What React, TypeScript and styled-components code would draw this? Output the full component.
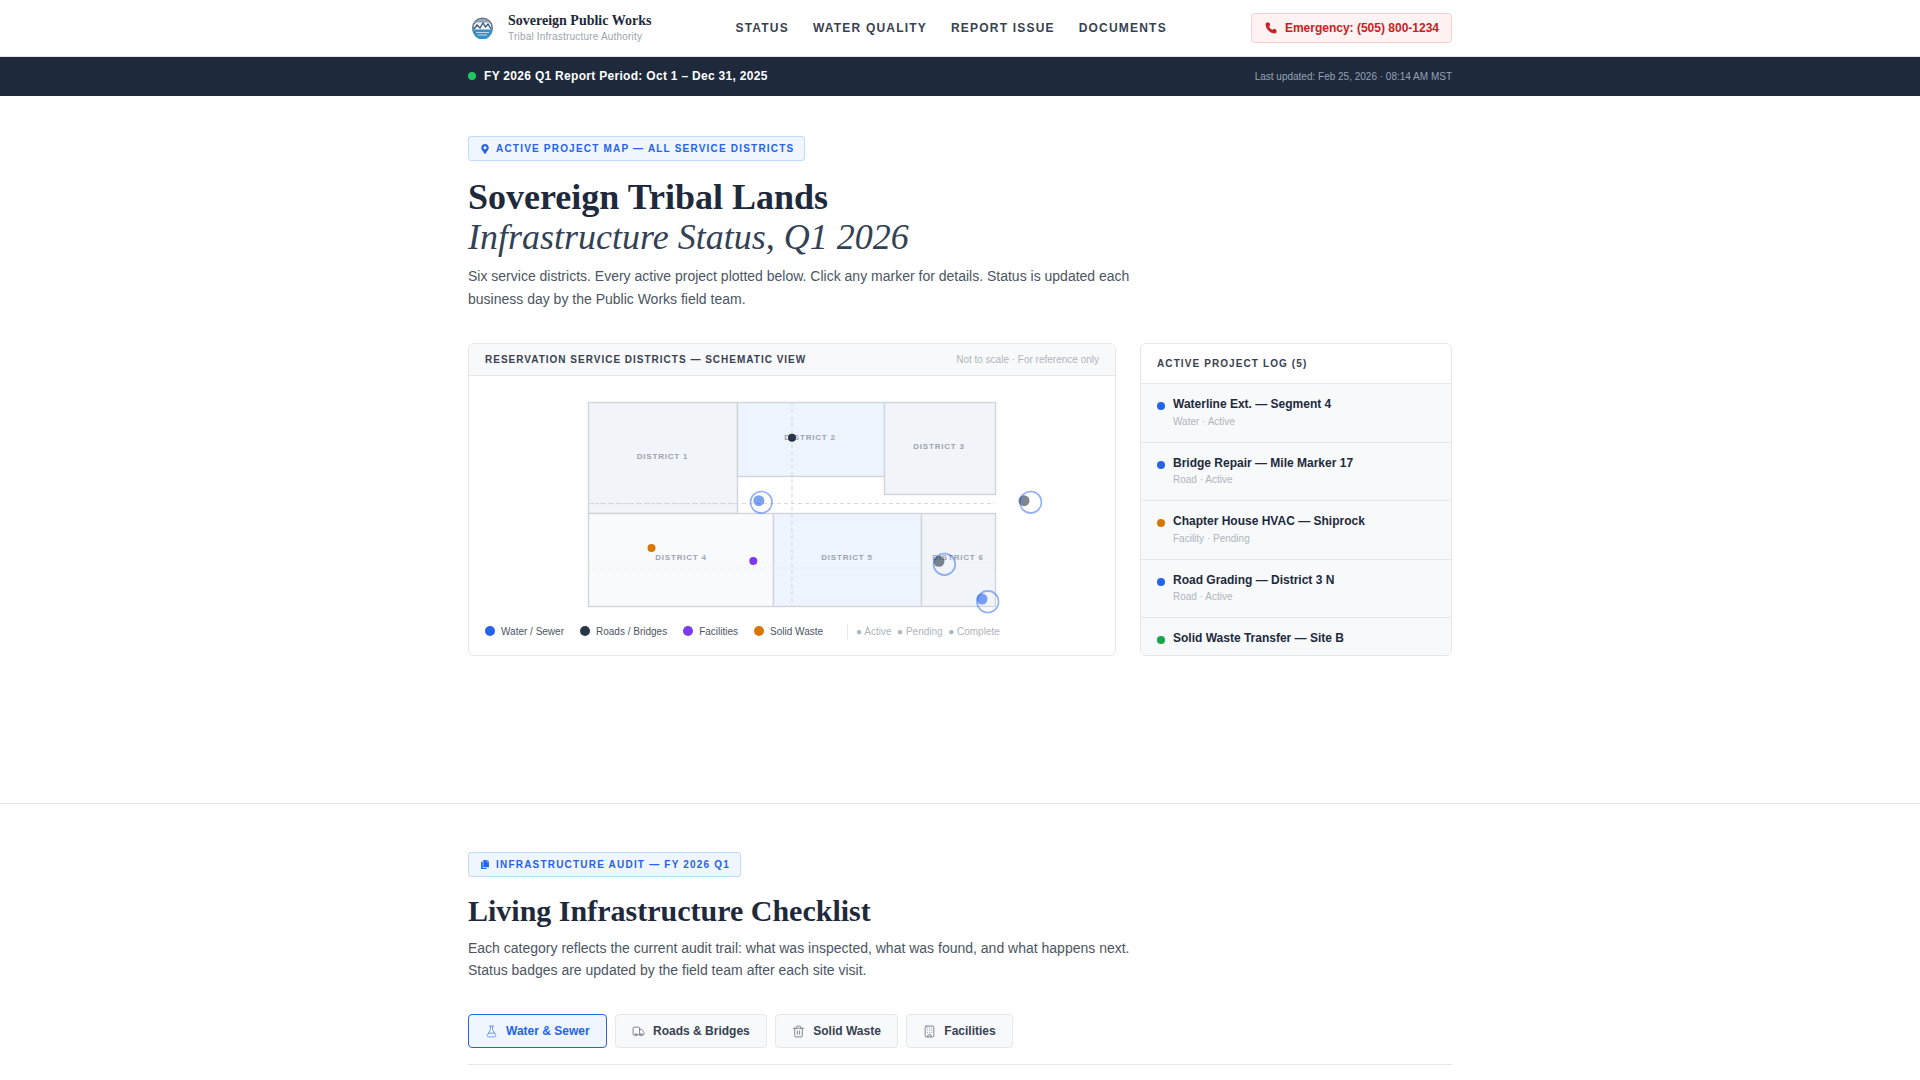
import React from "react";
import styled, { createGlobalStyle } from "styled-components";
import { Building, FlaskConical, Phone, Trash2, Truck } from "lucide-react";
import { FaCopy, FaMapMarkerAlt } from "react-icons/fa";

const GlobalStyle = createGlobalStyle`
  * {
    box-sizing: border-box;
  }

  html,
  body {
    margin: 0;
    background: #fff;
    overflow-x: hidden;
    font-family: "Liberation Sans", Arial, sans-serif;
    color: #1e293b;
  }
`;

const Wrap = styled.div`
  width: 984px;
  margin: 0 auto;
`;

// Top header
const Header = styled.header`
  height: 57px;
  border-bottom: 1px solid #e5e7eb;
  background: #fff;
`;

const HeaderRow = styled(Wrap)`
  height: 56px;
  display: flex;
  align-items: center;
`;

const Brand = styled.div`
  width: 240px;
  display: flex;
  align-items: center;
  gap: 15px;
  padding-left: 4px;
`;

const BrandText = styled.div`
  display: flex;
  flex-direction: column;
`;

const BrandName = styled.span`
  font-family: "Liberation Serif", "Times New Roman", serif;
  font-size: 14px;
  line-height: 17px;
  font-weight: 700;
  color: #1e293b;
`;

const BrandSub = styled.span`
  font-size: 10px;
  line-height: 14px;
  margin-top: 1px;
  letter-spacing: 0.2px;
  color: #9ca3af;
`;

const Nav = styled.nav`
  display: flex;
  gap: 24px;
  margin-left: 27.5px;
`;

const NavLink = styled.a`
  font-size: 12px;
  font-weight: 700;
  letter-spacing: 1.2px;
  color: #374151;
`;

const Emergency = styled.a`
  height: 30px;
  margin-left: auto;
  padding: 0 12px 0 13px;
  display: flex;
  align-items: center;
  gap: 8px;
  font-size: 12px;
  font-weight: 700;
  color: #c81e1e;
  background: #fef2f2;
  border: 1px solid #fecaca;
  border-radius: 4px;
`;

// Report period strip
const Strip = styled.div`
  height: 39px;
  background: #1e293b;
`;

const StripRow = styled(Wrap)`
  height: 100%;
  display: flex;
  align-items: center;
  justify-content: space-between;
`;

const Period = styled.div`
  display: flex;
  align-items: center;
  gap: 8px;
  font-size: 12px;
  line-height: 14px;
  padding-bottom: 1px;
  font-weight: 700;
  letter-spacing: 0.3px;
  color: #fff;
`;

const LiveDot = styled.span`
  width: 8px;
  height: 8px;
  border-radius: 50%;
  background: #22c55e;
`;

const Updated = styled.span`
  font-size: 10px;
  color: #94a3b8;
`;

// Sections
const MapSection = styled.section`
  padding: 40px 0 147px;
  border-bottom: 1px solid #e5e7eb;
`;

const AuditSection = styled.section`
  padding: 48px 0 15px;
`;

const Eyebrow = styled.div`
  display: inline-flex;
  align-items: center;
  gap: 6px;
  height: 25px;
  padding: 0 10px 0 11px;
  font-size: 10px;
  font-weight: 700;
  letter-spacing: 1.2px;
  color: #2563eb;
  background: #eff6ff;
  border: 1px solid #bfdbfe;
  border-radius: 3px;
  vertical-align: top;

  svg {
    width: 10px;
    flex: none;
  }
`;

const Title = styled.h1`
  margin: 16px 0 0;
  font-family: "Liberation Serif", "Times New Roman", serif;
  font-size: 36px;
  line-height: 40px;
  font-weight: 700;
  color: #1e293b;
`;

const TitleSub = styled.em`
  display: block;
  font-weight: 400;
  color: #334155;
`;

const SectionTitle = styled.h2`
  margin: 16px 0 0;
  font-family: "Liberation Serif", "Times New Roman", serif;
  font-size: 30px;
  line-height: 36px;
  font-weight: 700;
  color: #1e293b;
`;

const Lead = styled.p<{ $top: number; $lh: number }>`
  margin: ${(p) => p.$top}px 0 0;
  max-width: 680px;
  font-size: 14px;
  line-height: ${(p) => p.$lh}px;
  color: #4b5563;
`;

// Map + log
const Columns = styled.div`
  margin-top: 32px;
  display: grid;
  grid-template-columns: 648px 1fr;
  gap: 24px;
  height: 313px;
`;

const Card = styled.div`
  display: flex;
  flex-direction: column;
  overflow: hidden;
  background: #fff;
  border: 1px solid #e5e7eb;
  border-radius: 6px;
`;

const MapHead = styled.div`
  height: 32px;
  flex: none;
  padding: 0 16px;
  display: flex;
  align-items: center;
  justify-content: space-between;
  background: #f8f9fb;
  border-bottom: 1px solid #e5e7eb;
`;

const CardTitle = styled.span`
  font-size: 10px;
  font-weight: 700;
  letter-spacing: 1px;
  color: #374151;
`;

const Muted = styled.span`
  font-size: 10px;
  color: #adb5bd;
`;

const MapSvg = styled.svg`
  display: block;
  flex: none;
  width: 646px;
  height: 240px;
`;

const Legend = styled.div`
  display: flex;
  align-items: center;
  gap: 16px;
  padding: 0 16px;
  height: 30px;
`;

const LegendItem = styled.span`
  display: flex;
  align-items: center;
  gap: 6px;
  font-size: 10px;
  color: #4b5563;
`;

const Swatch = styled.span<{ $color: string }>`
  width: 10px;
  height: 10px;
  border-radius: 50%;
  background: ${(p) => p.$color};
`;

const LegendStatus = styled.span`
  margin-left: 8px;
  padding-left: 8px;
  border-left: 1px solid #e5e7eb;
  font-size: 10px;
  line-height: 15px;
  color: #adb5bd;
`;

const LogHead = styled.div`
  height: 40px;
  flex: none;
  padding: 0 16px;
  display: flex;
  align-items: center;
  border-bottom: 1px solid #e5e7eb;
`;

const LogTitle = styled(CardTitle)`
  letter-spacing: 1.1px;
`;

const LogRow = styled.div`
  flex: none;
  height: 58.5px;
  padding: 12px 16px 0;
  display: flex;
  align-items: flex-start;
  gap: 8px;
  background: #f8f9fb;
  border-bottom: 1px solid #e5e7eb;
`;

const LogDot = styled.span<{ $color: string }>`
  flex: none;
  width: 8px;
  height: 8px;
  margin-top: 6px;
  border-radius: 50%;
  background: ${(p) => p.$color};
`;

const LogName = styled.div`
  font-size: 12px;
  line-height: 16.5px;
  font-weight: 700;
  color: #1e293b;
`;

const LogMeta = styled.div`
  margin-top: 1px;
  font-size: 10px;
  line-height: 16px;
  color: #adb5bd;
`;

// Category tabs
const Tabs = styled.div`
  margin-top: 33px;
  padding-bottom: 16px;
  display: flex;
  gap: 8.5px;
  border-bottom: 1px solid #e5e7eb;
`;

const Tab = styled.button<{ $active?: boolean }>`
  height: 34px;
  padding: 0 16px;
  display: flex;
  align-items: center;
  gap: 8px;
  font-family: inherit;
  font-size: 12px;
  font-weight: 700;
  color: ${(p) => (p.$active ? "#2563eb" : "#374151")};
  background: ${(p) => (p.$active ? "#eff6ff" : "#f8f9fb")};
  border: 1px solid ${(p) => (p.$active ? "#2563eb" : "#e5e7eb")};
  border-radius: 4px;

  svg {
    opacity: 0.75;
  }
`;

const dark = "#293548";

const legend = [
  { label: "Water / Sewer", color: "#2563eb" },
  { label: "Roads / Bridges", color: dark },
  { label: "Facilities", color: "#7c3aed" },
  { label: "Solid Waste", color: "#d97706" },
];

const log = [
  { name: "Waterline Ext. — Segment 4", meta: "Water · Active", color: "#2563eb" },
  { name: "Bridge Repair — Mile Marker 17", meta: "Road · Active", color: "#2563eb" },
  { name: "Chapter House HVAC — Shiprock", meta: "Facility · Pending", color: "#d97706" },
  { name: "Road Grading — District 3 N", meta: "Road · Active", color: "#2563eb" },
  { name: "Solid Waste Transfer — Site B", color: "#16a34a" },
];

// map coords are page px minus the svg origin (469, 376)
const districts = [
  { x: 119.5, y: 26.5, w: 149, h: 111, fill: "#f1f4f9", label: "DISTRICT 1", lx: 193.5, ly: 81 },
  { x: 268.5, y: 26.5, w: 147, h: 74, fill: "#eef4fd", label: "DISTRICT 2", lx: 341, ly: 62 },
  { x: 415.5, y: 26.5, w: 111, h: 92, fill: "#f1f4f9", label: "DISTRICT 3", lx: 470, ly: 71 },
  { x: 119.5, y: 137.5, w: 185, h: 93, fill: "#f9fafc", label: "DISTRICT 4", lx: 212, ly: 182 },
  { x: 304.5, y: 137.5, w: 148, h: 93, fill: "#eef4fd", label: "DISTRICT 5", lx: 378, ly: 182 },
  { x: 452.5, y: 137.5, w: 74, h: 93, fill: "#f1f4f9", label: "DISTRICT 6", lx: 489, ly: 182 },
];

const rings = [
  { cx: 292.3, cy: 126.3, dx: 289.8, dy: 124.7, color: "#2563eb" },
  { cx: 561.7, cy: 126.3, dx: 555, dy: 124.7, color: dark },
  { cx: 475.4, cy: 188.3, dx: 470, dy: 185.3, color: dark },
  { cx: 518.8, cy: 225.7, dx: 513, dy: 223, color: "#2563eb" },
];

function DistrictMap() {
  return (
    <MapSvg viewBox="0 0 646 240">
      {districts.map((d) => (
        <rect key={d.label} x={d.x} y={d.y} width={d.w} height={d.h} fill={d.fill} stroke="#d1d5db" strokeWidth="1.4" />
      ))}
      <line x1="119" y1="127.5" x2="526" y2="127.5" stroke="#d6dae1" strokeWidth="1.2" strokeDasharray="4 3" />
      <line x1="119" y1="127.5" x2="268" y2="127.5" stroke="#d6dae1" strokeWidth="1.6" strokeDasharray="2 2" />
      <line x1="119" y1="192" x2="526" y2="192" stroke="#e5e7eb" strokeWidth="0.8" strokeDasharray="2 2" />
      <line x1="323" y1="26" x2="323" y2="230" stroke="#d6dae1" strokeWidth="1.2" strokeDasharray="4 3" />
      {districts.map((d) => (
        <text key={d.label} x={d.lx} y={d.ly} textAnchor="middle" dominantBaseline="middle" fontFamily="Liberation Sans, Arial, sans-serif" fontSize="8" fontWeight="700" letterSpacing="0.8" fill="#9ca3af">
          {d.label}
        </text>
      ))}
      <circle cx="323" cy="61.7" r="4" fill={dark} />
      <circle cx="182.5" cy="172" r="4" fill="#d97706" />
      <circle cx="284.3" cy="185" r="4" fill="#7c3aed" />
      {rings.map((r) => (
        <g key={r.cx}>
          <circle cx={r.dx} cy={r.dy} r="5.5" fill={r.color} opacity="0.6" />
          <circle cx={r.cx} cy={r.cy} r="10.8" fill="none" stroke="#2563eb" strokeWidth="1.6" opacity="0.5" />
        </g>
      ))}
    </MapSvg>
  );
}

function Logo() {
  return (
    <svg width="21" height="22" viewBox="0 0 21 22">
      <circle cx="10.5" cy="11" r="9.7" fill="#f1f5f9" stroke="#64748b" strokeWidth="1.6" />
      <path d="M3 5.5a9.7 9.7 0 0 1 15 0z" fill="#94a3b8" />
      <path d="M0.5 12.5h20a10 10 0 0 1-20 0z" fill="#3b8fc4" />
      <path d="M2 12l3-4 3 3 3-5 2.5 4 2.5-3 3 5" fill="none" stroke="#33566f" strokeWidth="1.3" />
      <path d="M4 15.5h13M6 18h9" fill="none" stroke="#dbeafe" strokeWidth="0.8" />
    </svg>
  );
}

export default function App() {
  return (
    <>
      <GlobalStyle />
      <Header>
        <HeaderRow>
          <Brand>
            <Logo />
            <BrandText>
              <BrandName>Sovereign Public Works</BrandName>
              <BrandSub>Tribal Infrastructure Authority</BrandSub>
            </BrandText>
          </Brand>
          <Nav>
            <NavLink>STATUS</NavLink>
            <NavLink>WATER QUALITY</NavLink>
            <NavLink>REPORT ISSUE</NavLink>
            <NavLink>DOCUMENTS</NavLink>
          </Nav>
          <Emergency>
            <Phone size={12} fill="#c81e1e" strokeWidth={2} />
            Emergency: (505) 800-1234
          </Emergency>
        </HeaderRow>
      </Header>
      <Strip>
        <StripRow>
          <Period>
            <LiveDot />
            FY 2026 Q1 Report Period: Oct 1 – Dec 31, 2025
          </Period>
          <Updated>Last updated: Feb 25, 2026 · 08:14 AM MST</Updated>
        </StripRow>
      </Strip>
      <MapSection>
        <Wrap>
          <Eyebrow>
            <FaMapMarkerAlt size={10} />
            ACTIVE PROJECT MAP — ALL SERVICE DISTRICTS
          </Eyebrow>
          <Title>
            Sovereign Tribal Lands
            <TitleSub>Infrastructure Status, Q1 2026</TitleSub>
          </Title>
          <Lead $top={8} $lh={23}>
            Six service districts. Every active project plotted below. Click any marker for details. Status is updated each
            business day by the Public Works field team.
          </Lead>
          <Columns>
            <Card>
              <MapHead>
                <CardTitle>RESERVATION SERVICE DISTRICTS — SCHEMATIC VIEW</CardTitle>
                <Muted>Not to scale · For reference only</Muted>
              </MapHead>
              <DistrictMap />
              <Legend>
                {legend.map((l) => (
                  <LegendItem key={l.label}>
                    <Swatch $color={l.color} />
                    {l.label}
                  </LegendItem>
                ))}
                <LegendStatus>● Active &nbsp;● Pending &nbsp;● Complete</LegendStatus>
              </Legend>
            </Card>
            <Card>
              <LogHead>
                <LogTitle>ACTIVE PROJECT LOG (5)</LogTitle>
              </LogHead>
              {log.map((item) => (
                <LogRow key={item.name}>
                  <LogDot $color={item.color} />
                  <div>
                    <LogName>{item.name}</LogName>
                    {item.meta && <LogMeta>{item.meta}</LogMeta>}
                  </div>
                </LogRow>
              ))}
            </Card>
          </Columns>
        </Wrap>
      </MapSection>
      <AuditSection>
        <Wrap>
          <Eyebrow>
            <FaCopy size={9} />
            INFRASTRUCTURE AUDIT — FY 2026 Q1
          </Eyebrow>
          <SectionTitle>Living Infrastructure Checklist</SectionTitle>
          <Lead $top={8} $lh={22}>
            Each category reflects the current audit trail: what was inspected, what was found, and what happens next.
            Status badges are updated by the field team after each site visit.
          </Lead>
          <Tabs>
            <Tab $active>
              <FlaskConical size={13} strokeWidth={1.5} />
              Water &amp; Sewer
            </Tab>
            <Tab>
              <Truck size={13} strokeWidth={1.5} />
              Roads &amp; Bridges
            </Tab>
            <Tab>
              <Trash2 size={13} strokeWidth={1.5} />
              Solid Waste
            </Tab>
            <Tab>
              <Building size={13} strokeWidth={1.5} />
              Facilities
            </Tab>
          </Tabs>
        </Wrap>
      </AuditSection>
    </>
  );
}
